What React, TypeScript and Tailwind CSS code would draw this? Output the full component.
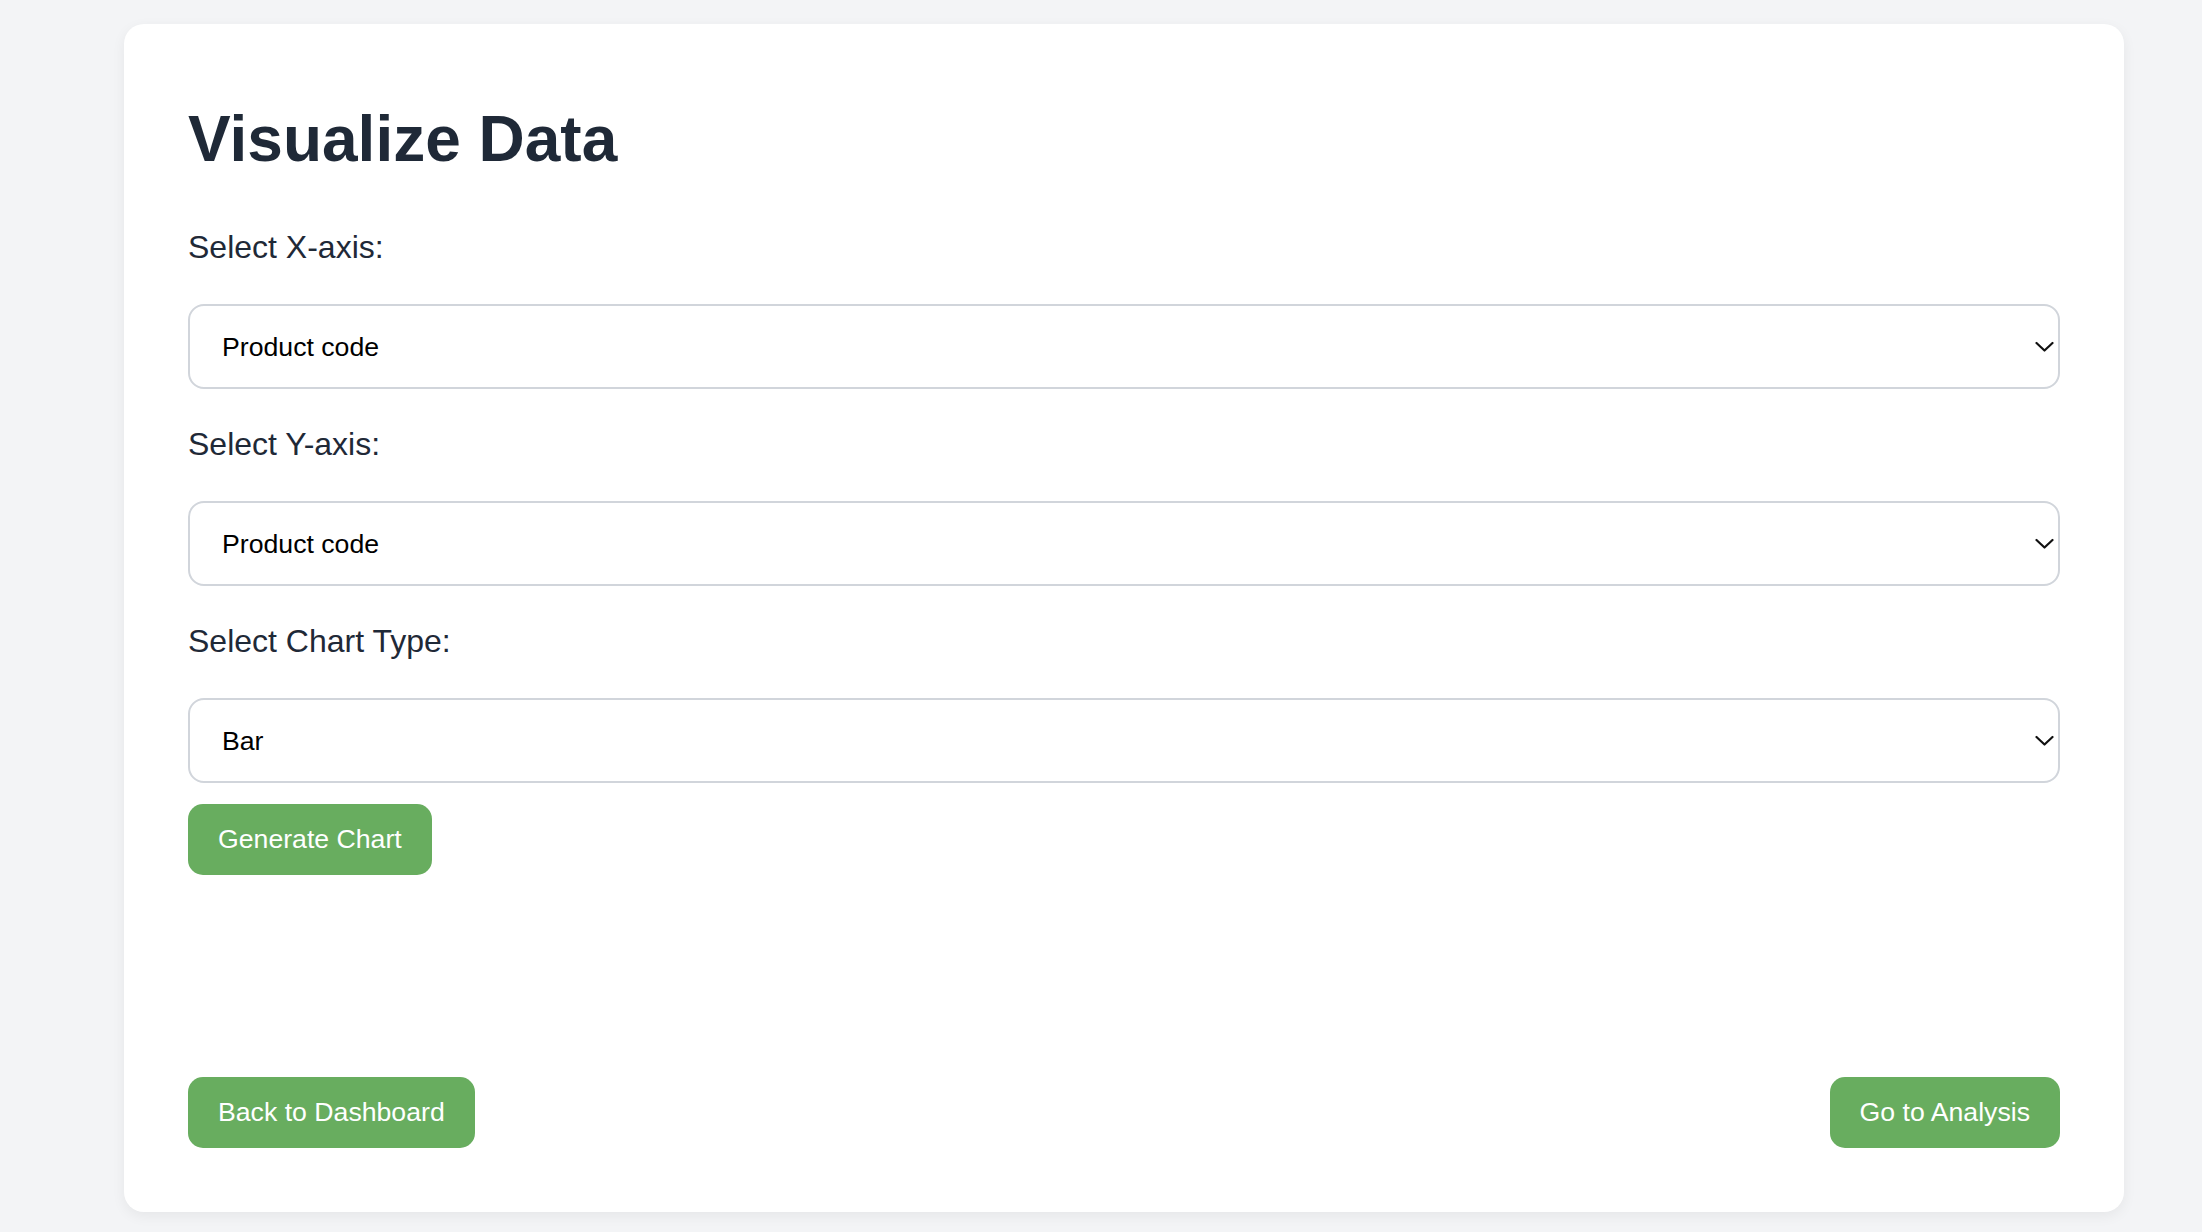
import { useState } from "react";

const fields = ["Product code", "Product name", "Category", "Price", "Quantity", "Sales"];
const chartTypes = ["Bar", "Line", "Pie", "Scatter"];

function Chevron() {
  return (
    <svg
      className="pointer-events-none absolute right-[6px] top-1/2 -translate-y-1/2"
      width="19"
      height="11"
      viewBox="0 0 19 11"
      fill="none"
    >
      <path d="M1.5 1.5 L9.5 9 L17.5 1.5" stroke="#111111" strokeWidth="2.2" strokeLinecap="round" strokeLinejoin="round" />
    </svg>
  );
}

function SelectField({
  label,
  value,
  options,
  onChange,
  className,
}: {
  label: string;
  value: string;
  options: string[];
  onChange: (v: string) => void;
  className?: string;
}) {
  return (
    <div className={className}>
      <label className="block text-[32px] leading-[37px] text-[#1f2937]">{label}</label>
      <div className="relative mt-[38px]">
        <select
          value={value}
          onChange={(e) => onChange(e.target.value)}
          className="block h-[85px] w-full appearance-none rounded-[16px] border-2 border-[#d1d5db] bg-white pl-[32px] pr-[40px] text-[26.67px] text-black outline-none"
        >
          {options.map((o) => (
            <option key={o} value={o}>
              {o}
            </option>
          ))}
        </select>
        <Chevron />
      </div>
    </div>
  );
}

export default function App() {
  const [xAxis, setXAxis] = useState("Product code");
  const [yAxis, setYAxis] = useState("Product code");
  const [chartType, setChartType] = useState("Bar");

  const btn =
    "h-[71px] rounded-[15px] bg-[#68ad5f] px-[30px] text-[26.67px] leading-[31px] text-white hover:bg-[#5c9f54]";

  return (
    <div className="min-h-screen bg-[#f3f4f6] pt-[24px] pb-[21px] font-['Liberation_Sans',Arial,sans-serif]">
      <div className="ml-[124px] w-[2000px] rounded-[20px] bg-white p-16 shadow-[0_4px_14px_rgba(0,0,0,0.06)]">
        <h1 className="mt-[14px] text-[64px] font-bold leading-[74px] text-[#1f2937]">Visualize Data</h1>

        <SelectField className="mt-[53px]" label="Select X-axis:" value={xAxis} options={fields} onChange={setXAxis} />
        <SelectField className="mt-[37px]" label="Select Y-axis:" value={yAxis} options={fields} onChange={setYAxis} />
        <SelectField
          className="mt-[37px]"
          label="Select Chart Type:"
          value={chartType}
          options={chartTypes}
          onChange={setChartType}
        />

        <button className={`mt-[21px] ${btn}`}>Generate Chart</button>

        {/* chart area */}
        <div className="h-[202px]" />

        <div className="flex items-center justify-between">
          <button className={btn}>Back to Dashboard</button>
          <button className={btn}>Go to Analysis</button>
        </div>
      </div>
    </div>
  );
}
